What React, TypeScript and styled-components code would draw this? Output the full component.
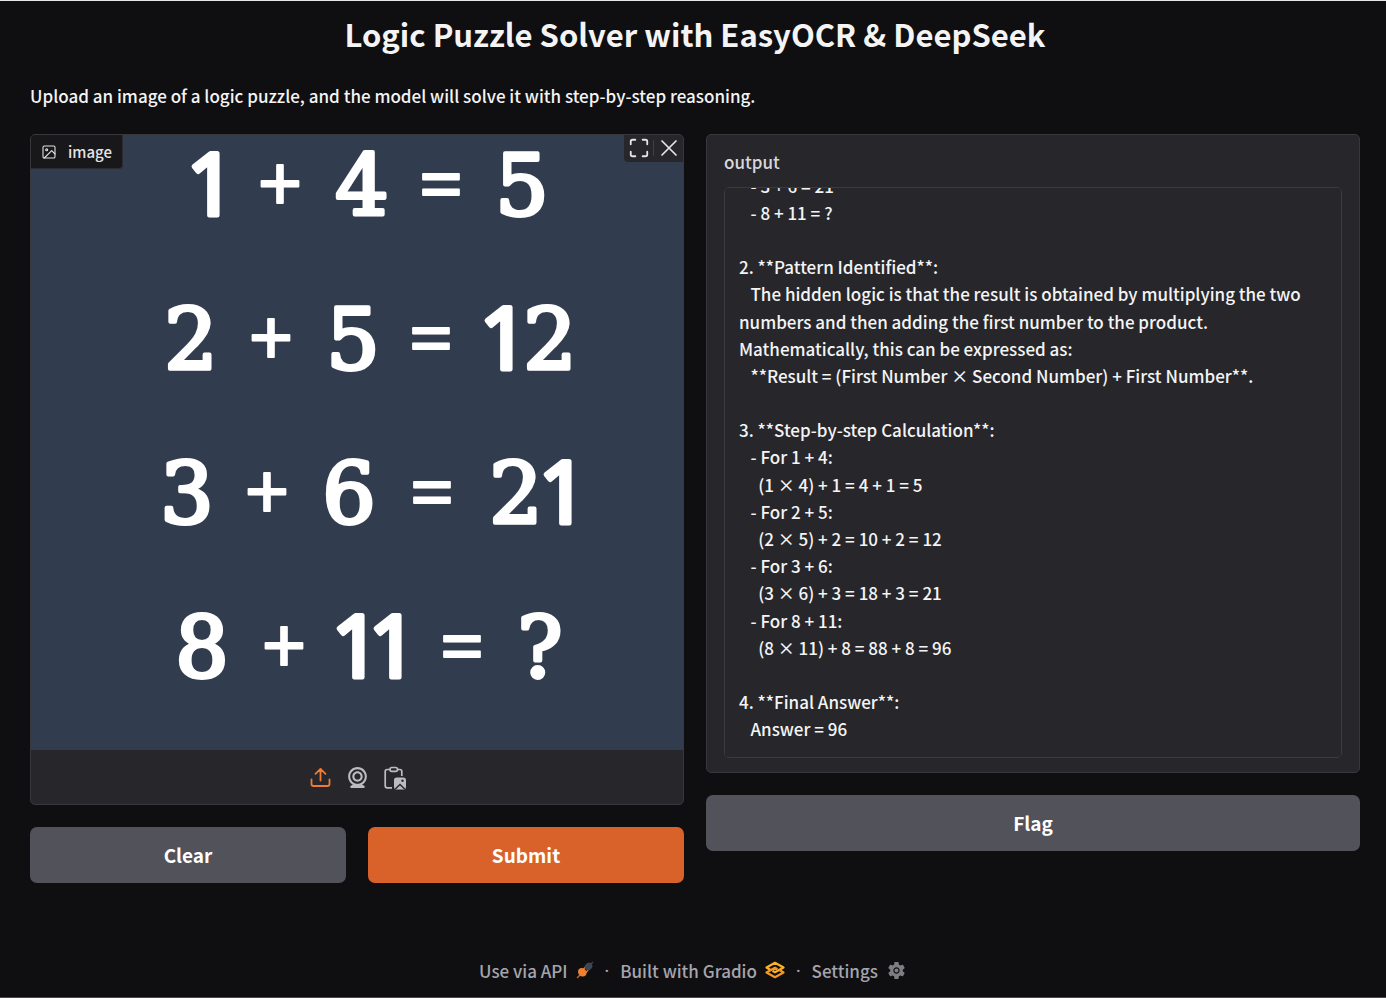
import React, { useLayoutEffect, useRef } from 'react';
import styled, { createGlobalStyle } from 'styled-components';

const sans = '"Noto Sans CJK SC", "Noto Sans", sans-serif';

const GlobalStyle = createGlobalStyle`
  *, *::before, *::after { box-sizing: border-box; }
  body {
    margin: 0;
    background: #0f0f11;
    color: #f4f4f5;
    font-family: ${sans};
    font-size: 17px;
    font-weight: 500;
    line-height: 1.6;
  }
  button, textarea { font: inherit; color: inherit; }
`;

const Page = styled.div`
  display: flex;
  flex-direction: column;
  min-height: 100vh;
  padding: 0 26px 0 30px;
  border-top: 1px solid #e3e7e6;
  border-bottom: 1px solid #4c464b;
`;

const Title = styled.h1`
  margin: 10px 0 0;
  font-size: 31px;
  line-height: 46px;
  font-weight: 700;
  text-align: center;
`;

const Intro = styled.p`
  margin: 25px 0 0;
  line-height: 27px;
`;

const Columns = styled.main`
  display: grid;
  grid-template-columns: 1fr 1fr;
  align-items: start;
  gap: 22px;
  margin-top: 25px;
`;

const Column = styled.div`
  display: flex;
  flex-direction: column;
  gap: 22px;
  min-width: 0;
`;

const Panel = styled.section`
  position: relative;
  overflow: hidden;
  border: 1px solid #37373c;
  border-radius: 5px;
  background: #27272b;
`;

const Picture = styled.svg`
  display: block;
  width: 100%;
  height: auto;
  background: #313d4e;
  fill: #fff;
  stroke: #fff;
  stroke-linejoin: round;
  text-anchor: middle;
`;

const PanelTag = styled.div`
  position: absolute;
  top: 0;
  left: 0;
  display: flex;
  align-items: center;
  gap: 11px;
  height: 34px;
  padding: 0 10px;
  border-right: 1px solid #2c2c30;
  border-bottom: 1px solid #2c2c30;
  border-radius: 0 0 4px 0;
  background: #18181b;
  color: #e4e4e7;
  font-size: 15px;
`;

const CornerTools = styled.div`
  position: absolute;
  top: 0;
  right: 0;
  display: flex;
  align-items: center;
  height: 27px;
  padding: 0 4px 1px;
  border-radius: 0 0 0 4px;
  background: #27272b;
`;

const Divider = styled.span`
  width: 1px;
  height: 16px;
  margin: 0 5px 0 3px;
  background: #3f3f46;
`;

const IconButton = styled.button<{ $active?: boolean }>`
  display: flex;
  padding: 0;
  border: 0;
  background: none;
  color: ${(p) => (p.$active ? '#ee7b35' : '#bbbbc2')};
  cursor: pointer;

  ${CornerTools} & { color: #e4e4e7; }
`;

const SourceBar = styled.div`
  display: flex;
  align-items: center;
  justify-content: center;
  gap: 12px;
  height: 55px;
  border-top: 1px solid #3a3a40;
`;

const ButtonRow = styled.div`
  display: grid;
  grid-template-columns: 1fr 1fr;
  gap: 22px;
`;

const Button = styled.button<{ $primary?: boolean }>`
  height: 56px;
  border: 0;
  border-radius: 7px;
  background: ${(p) => (p.$primary ? '#d9622b' : '#52525b')};
  color: #fff;
  font-size: 19px;
  font-weight: 700;
  cursor: pointer;
`;

const OutputPanel = styled(Panel)`
  display: flex;
  flex-direction: column;
  padding: 13px 17px 14px;
`;

const OutputLabel = styled.label`
  margin-bottom: 12px;
  line-height: 27px;
  color: #d8d8dc;
`;

const OutputText = styled.textarea`
  display: block;
  width: 100%;
  height: 571px;
  padding: 14px 24px 14px 14px;
  border: 1px solid #3a3a40;
  border-radius: 5px;
  outline: 0;
  background: #27272b;
  resize: none;
  overflow-y: scroll;
  scrollbar-width: none;
  line-height: 1.6;
  font-family: "Noto Sans CJK KR", "Noto Sans", sans-serif;
  font-feature-settings: "palt";
`;

const Footer = styled.footer`
  display: flex;
  align-items: center;
  justify-content: center;
  margin-top: auto;
  padding: 20px 4px 13px 0;
  color: #a5a5ad;
`;

const FooterLink = styled.a`
  display: flex;
  align-items: center;
  gap: 8px;
  color: inherit;
  text-decoration: none;
`;

const Dot = styled.span`
  margin: 0 11px;
  font-family: "Noto Sans", sans-serif;
`;

type Token = { t: string; x: number };

const equations: Token[][] = [
  [{ t: '1', x: 180 }, { t: '+', x: 249 }, { t: '4', x: 331 }, { t: '=', x: 410 }, { t: '5', x: 491 }],
  [{ t: '2', x: 160 }, { t: '+', x: 240 }, { t: '5', x: 322 }, { t: '=', x: 400 }, { t: '1', x: 473 }, { t: '2', x: 519 }],
  [{ t: '3', x: 156 }, { t: '+', x: 236 }, { t: '6', x: 318 }, { t: '=', x: 401 }, { t: '2', x: 485 }, { t: '1', x: 532 }],
  [{ t: '8', x: 171 }, { t: '+', x: 253 }, { t: '1', x: 325 }, { t: '1', x: 362 }, { t: '=', x: 431 }, { t: '?', x: 509 }],
];

const styleFor = (t: string) => {
  if (t === '+' || t === '=') return { family: '"Noto Sans", sans-serif', size: 78, stroke: 2, rise: 5 };
  if (t === '1') return { family: '"Noto Sans", sans-serif', size: 86, stroke: 5, rise: 2 };
  return { family: '"DejaVu Serif", serif', size: 84, stroke: 4, rise: 2 };
};

function PuzzlePicture() {
  return (
    <Picture viewBox="0 0 652 614" role="img" aria-label="Logic puzzle">
      {equations.map((row, r) => (
        <text key={r}>
          {row.map((token, i) => {
            const s = styleFor(token.t);
            return (
              <tspan key={i} x={token.x} y={82 + r * 154 - s.rise} fontFamily={s.family} fontSize={s.size} fontWeight={400} strokeWidth={s.stroke}>
                {token.t}
              </tspan>
            );
          })}
        </text>
      ))}
    </Picture>
  );
}

const ImageIcon = () => (
  <svg width="16" height="16" viewBox="0 0 24 24" fill="none" stroke="currentColor" strokeWidth="1.6" strokeLinecap="round" strokeLinejoin="round">
    <rect x="3" y="3" width="18" height="18" rx="2" />
    <circle cx="8.5" cy="8.5" r="1.5" />
    <path d="M21 15l-5-5L5 21" />
  </svg>
);

const ExpandIcon = () => (
  <svg width="22" height="22" viewBox="0 0 24 24" fill="none" stroke="currentColor" strokeWidth="2" strokeLinecap="round" strokeLinejoin="round">
    <path d="M8 3H5a2 2 0 0 0-2 2v3M21 8V5a2 2 0 0 0-2-2h-3M3 16v3a2 2 0 0 0 2 2h3M16 21h3a2 2 0 0 0 2-2v-3" />
  </svg>
);

const CloseIcon = () => (
  <svg width="20" height="20" viewBox="0 0 20 20" fill="none" stroke="currentColor" strokeWidth="1.7" strokeLinecap="round">
    <path d="M3 3l14 14M17 3L3 17" />
  </svg>
);

const UploadIcon = () => (
  <svg width="25" height="25" viewBox="0 0 25 25" fill="none" stroke="currentColor" strokeWidth="1.8" strokeLinecap="round" strokeLinejoin="round">
    <path d="M12.5 15.500V3.800M7.500 8.800l5-5 5 5M3.500 14.500v4.500a2 2 0 0 0 2 2h14a2 2 0 0 0 2-2v-4.500" />
  </svg>
);

const WebcamIcon = () => (
  <svg width="25" height="25" viewBox="0 0 24 24" fill="currentColor">
    <path d="M12 2c-4.963 0-9 4.038-9 9c0 3.328 1.82 6.232 4.513 7.79l-2.067 1.378A1 1 0 0 0 6 22h12a1 1 0 0 0 .555-1.832l-2.067-1.378C19.18 17.232 21 14.328 21 11c0-4.962-4.037-9-9-9zm0 16c-3.859 0-7-3.141-7-7c0-3.86 3.141-7 7-7s7 3.14 7 7c0 3.859-3.141 7-7 7z" />
    <path d="M12 6c-2.757 0-5 2.243-5 5s2.243 5 5 5s5-2.243 5-5s-2.243-5-5-5zm0 8c-1.654 0-3-1.346-3-3s1.346-3 3-3s3 1.346 3 3s-1.346 3-3 3z" />
  </svg>
);

const PasteIcon = () => (
  <svg width="25" height="25" viewBox="0 0 25 25" fill="none" stroke="currentColor" strokeWidth="1.700">
    <path d="M8 4.500H5.200a2 2 0 0 0-2 2v14.300a2 2 0 0 0 2 2H10M15.500 4.500h2.300a2 2 0 0 1 2 2V11" />
    <rect x="8" y="2.500" width="7.500" height="3.800" rx="1.800" />
    <rect x="12" y="12.500" width="12" height="12" rx="2.800" fill="currentColor" stroke="none" />
    <circle cx="20.500" cy="15.800" r="1.200" fill="#27272b" stroke="none" />
    <path d="M13.300 24l4.700-4.600 4.700 4.600" stroke="#27272b" strokeWidth="1.400" />
  </svg>
);

const PlugIcon = () => (
  <svg width="18" height="18" viewBox="0 0 18 18" strokeLinecap="round">
    <path d="M1.500 16.500l2.500-2.500" stroke="#c2601d" strokeWidth="1.600" />
    <ellipse cx="6.300" cy="11.300" rx="4" ry="4.600" transform="rotate(-45 6.300 11.300)" fill="#f0802f" />
    <path d="M7.500 8l1.500-1.500M10.300 11l1.500-1.500" stroke="#f0802f" strokeWidth="1.300" />
    <ellipse cx="12.500" cy="5.500" rx="3.500" ry="4" transform="rotate(45 12.500 5.500)" fill="#3d4753" />
    <path d="M14.500 3.500l2-2" stroke="#3d4753" strokeWidth="1.500" />
  </svg>
);

const GradioLogo = () => (
  <svg width="20" height="18" viewBox="0 0 20 18" fill="none" strokeWidth="2.200" strokeLinejoin="round">
    <path d="M5.500 9L1.500 6.500 10 1.800l8.500 4.700L10 11.200 7.500 9.800" stroke="#fbb324" />
    <path d="M14.500 9l4 2.500-8.500 4.700-8.500-4.700L10 6.800l2.500 1.400" stroke="#f6981f" />
  </svg>
);

const GearIcon = () => (
  <svg width="21" height="21" viewBox="0 0 24 24" fill="#7d7d82">
    <path d="M19.14 12.94c.04-.3.06-.61.06-.94 0-.32-.02-.64-.07-.94l2.03-1.58a.49.49 0 0 0 .12-.61l-1.920-3.320a.488.488 0 0 0-.59-.22l-2.390.96c-.5-.38-1.030-.7-1.620-.94l-.36-2.540a.484.484 0 0 0-.48-.41h-3.840c-.24 0-.43.17-.47.41l-.36 2.540c-.59.24-1.130.57-1.620.94l-2.390-.96c-.22-.08-.47 0-.59.22L2.740 8.870c-.12.21-.08.47.12.61l2.030 1.580c-.05.3-.09.63-.09.94s.02.64.07.94l-2.030 1.580a.49.49 0 0 0-.12.61l1.920 3.320c.12.22.37.29.59.22l2.390-.96c.5.38 1.030.7 1.620.94l.36 2.540c.05.24.24.41.48.41h3.840c.24 0 .44-.17.47-.41l.36-2.540c.59-.24 1.130-.56 1.620-.94l2.390.96c.22.08.47 0 .59-.22l1.920-3.320c.12-.22.07-.47-.12-.61l-2.010-1.580zM12 15.600c-1.980 0-3.600-1.620-3.600-3.600s1.620-3.600 3.600-3.600 3.600 1.620 3.600 3.600-1.620 3.600-3.600 3.600z" />
    <circle cx="12" cy="12" r="2.300" />
  </svg>
);

const answer = `1. **Extracted Equations**:
   - 1 + 4 = 5
   - 2 + 5 = 12
   - 3 + 6 = 21
   - 8 + 11 = ?

2. **Pattern Identified**:
   The hidden logic is that the result is obtained by multiplying the two numbers and then adding the first number to the product. Mathematically, this can be expressed as:
   **Result = (First Number × Second Number) + First Number**.

3. **Step-by-step Calculation**:
   - For 1 + 4:
     (1 × 4) + 1 = 4 + 1 = 5
   - For 2 + 5:
     (2 × 5) + 2 = 10 + 2 = 12
   - For 3 + 6:
     (3 × 6) + 3 = 18 + 3 = 21
   - For 8 + 11:
     (8 × 11) + 8 = 88 + 8 = 96

4. **Final Answer**:
   Answer = 96`;

export default function App() {
  const output = useRef<HTMLTextAreaElement>(null);

  useLayoutEffect(() => {
    const el = output.current;
    if (el) el.scrollTop = el.scrollHeight;
  }, []);

  return (
    <>
      <GlobalStyle />
      <Page>
        <Title>Logic Puzzle Solver with EasyOCR &amp; DeepSeek</Title>
        <Intro>Upload an image of a logic puzzle, and the model will solve it with step-by-step reasoning.</Intro>
        <Columns>
          <Column>
            <Panel aria-label="image">
              <PuzzlePicture />
              <PanelTag><ImageIcon />image</PanelTag>
              <CornerTools>
                <IconButton aria-label="Fullscreen"><ExpandIcon /></IconButton>
                <Divider />
                <IconButton aria-label="Remove image"><CloseIcon /></IconButton>
              </CornerTools>
              <SourceBar>
                <IconButton $active aria-label="Upload file"><UploadIcon /></IconButton>
                <IconButton aria-label="Capture from camera"><WebcamIcon /></IconButton>
                <IconButton aria-label="Paste from clipboard"><PasteIcon /></IconButton>
              </SourceBar>
            </Panel>
            <ButtonRow>
              <Button>Clear</Button>
              <Button $primary>Submit</Button>
            </ButtonRow>
          </Column>
          <Column>
            <OutputPanel>
              <OutputLabel htmlFor="output">output</OutputLabel>
              <OutputText id="output" ref={output} readOnly spellCheck={false} value={answer} />
            </OutputPanel>
            <Button>Flag</Button>
          </Column>
        </Columns>
        <Footer>
          <FooterLink href="#api">Use via API <PlugIcon /></FooterLink>
          <Dot>·</Dot>
          <FooterLink href="#gradio">Built with Gradio <GradioLogo /></FooterLink>
          <Dot>·</Dot>
          <FooterLink href="#settings">Settings <GearIcon /></FooterLink>
        </Footer>
      </Page>
    </>
  );
}
